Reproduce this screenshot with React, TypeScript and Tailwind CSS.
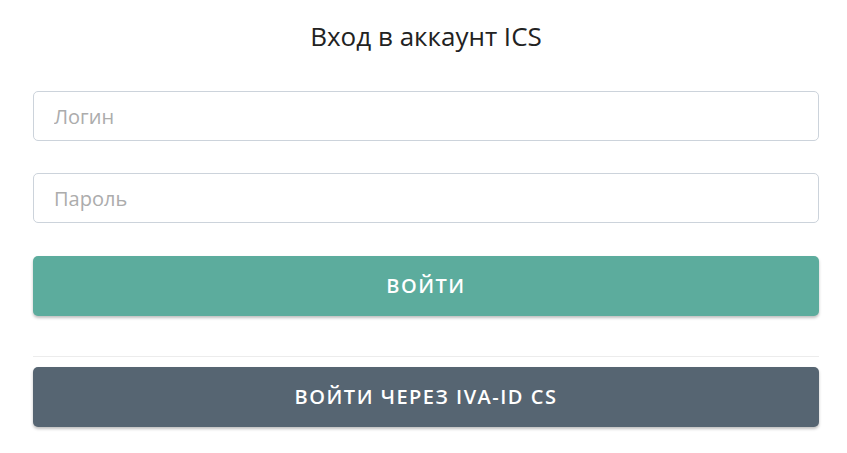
import React from 'react';

export default function App() {
  return (
    <div className="min-h-[453px] bg-white pl-[33px] pr-[28px] pt-[18px] font-['Open_Sans',sans-serif]">
      <h1 className="text-center text-[26px] leading-[36px] text-[#222]">Вход в аккаунт ICS</h1>

      <form className="mt-[37px] flex flex-col" onSubmit={(e) => e.preventDefault()}>
        <input
          type="text"
          placeholder="Логин"
          className="h-[50px] rounded-[5px] border border-[#ccd3db] px-[20px] text-[20px] text-[#333] outline-none placeholder:text-[#acacac]"
        />
        <input
          type="password"
          placeholder="Пароль"
          className="mt-[32px] h-[50px] rounded-[5px] border border-[#ccd3db] px-[20px] text-[20px] text-[#333] outline-none placeholder:text-[#acacac]"
        />
        <button
          type="submit"
          className="mt-[33px] h-[60px] rounded-[5px] bg-[#5cac9d] text-[20px] font-semibold tracking-[1.5px] text-white shadow-[0_2px_3px_rgba(0,0,0,0.25)]"
        >
          ВОЙТИ
        </button>
      </form>

      <div className="mt-[40px] border-t border-[#ececec]" />

      <button
        type="button"
        className="mt-[10px] h-[60px] w-full rounded-[5px] bg-[#566572] text-[20px] font-semibold tracking-[1.5px] text-white shadow-[0_2px_3px_rgba(0,0,0,0.25)]"
      >
        ВОЙТИ ЧЕРЕЗ IVA-ID CS
      </button>
    </div>
  );
}
